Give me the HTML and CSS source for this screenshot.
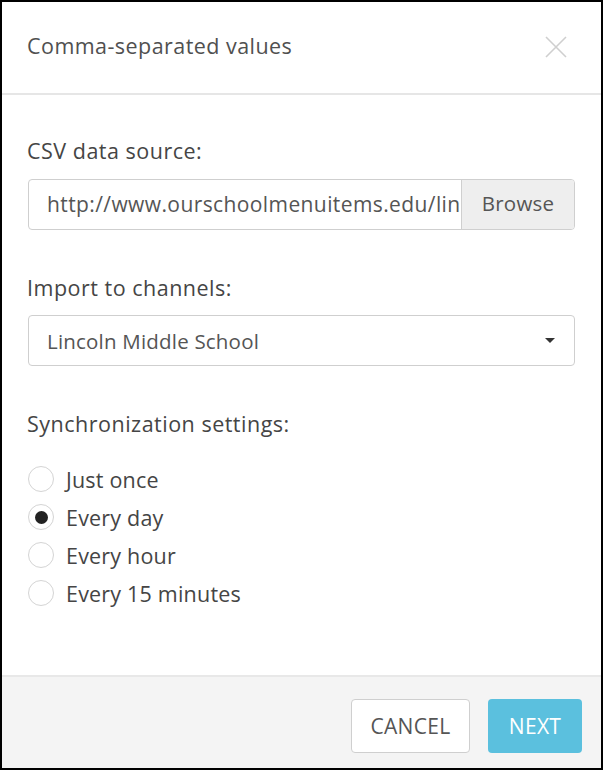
FILE: index.html
```html
<!DOCTYPE html>
<html>
<head>
<meta charset="utf-8">
<link rel="stylesheet" href="styles.css">
</head>
<body>
<div class="frame">
  <div class="header">
    <span class="title">Comma-separated values</span>
    <svg class="close" width="22" height="22" viewBox="0 0 22 22"><path d="M1 1 L21 21 M21 1 L1 21" stroke="#cfcfcf" stroke-width="1.6" fill="none"/></svg>
  </div>
  <div class="content">
    <div class="label">CSV data source:</div>
    <div class="input-group">
      <div class="input">http://www.ourschoolmenuitems.edu/lincoln-middle-school/menu.csv</div>
      <div class="addon">Browse</div>
    </div>
    <div class="label">Import to channels:</div>
    <div class="select">
      <span>Lincoln Middle School</span>
      <span class="caret"></span>
    </div>
    <div class="label">Synchronization settings:</div>
    <div class="radios">
      <div class="radio"><span class="circle"></span><span>Just once</span></div>
      <div class="radio"><span class="circle checked"></span><span>Every day</span></div>
      <div class="radio"><span class="circle"></span><span>Every hour</span></div>
      <div class="radio"><span class="circle"></span><span>Every 15 minutes</span></div>
    </div>
  </div>
  <div class="footer">
    <div class="btn cancel">CANCEL</div>
    <div class="btn next">NEXT</div>
  </div>
</div>
</body>
</html>
```
FILE: styles.css
```css
html, body {
  margin: 0;
  padding: 0;
}
body {
  font-family: "Open Sans", "Lato", sans-serif;
  color: #474747;
}
.frame {
  box-sizing: border-box;
  width: 603px;
  height: 770px;
  border: 2px solid #000;
  background: #fff;
  display: flex;
  flex-direction: column;
}
.header {
  height: 91px;
  border-bottom: 2px solid #e6e6e6;
  display: flex;
  align-items: center;
  justify-content: space-between;
  padding: 0 34px 0 25px;
}
.title {
  font-size: 21.5px;
  letter-spacing: 0.45px;
  color: #505050;
  margin-top: -4px;
}
.close {
  margin-top: -2px;
}
.content {
  flex: 1;
  padding: 44px 26px 0 26px;
}
.label {
  font-size: 21.5px;
  letter-spacing: 0.5px;
  color: #454545;
  line-height: 24px;
  margin-left: -1px;
}
.input-group {
  display: flex;
  height: 51px;
  margin-top: 16px;
  margin-bottom: 46px;
  border: 1px solid #cfcfcf;
  border-radius: 4px;
  box-sizing: border-box;
  overflow: hidden;
}
.input {
  flex: 1;
  min-width: 0;
  white-space: nowrap;
  overflow: hidden;
  font-size: 21px;
  letter-spacing: 0.4px;
  color: #555;
  line-height: 49px;
  padding-left: 18px;
  padding-right: 2px;
}
.addon {
  width: 112px;
  border-left: 1px solid #cfcfcf;
  background: #eeeeee;
  text-align: center;
  line-height: 47px;
  font-size: 20.5px;
  letter-spacing: 0.2px;
  color: #555;
}
.select {
  margin-top: 15px;
  margin-bottom: 46px;
  height: 51px;
  box-sizing: border-box;
  border: 1px solid #cfcfcf;
  border-radius: 4px;
  display: flex;
  align-items: center;
  justify-content: space-between;
  padding: 0 19px 0 18px;
  font-size: 20.5px;
  letter-spacing: 0.2px;
  color: #555;
}
.caret {
  width: 0;
  height: 0;
  border-left: 5.5px solid transparent;
  border-right: 5.5px solid transparent;
  border-top: 5px solid #333;
}
.radios {
  margin-top: 30px;
  display: flex;
  flex-direction: column;
  gap: 12px;
}
.radio {
  display: flex;
  align-items: center;
  height: 26px;
  font-size: 21.5px;
  letter-spacing: 0.2px;
  color: #454545;
}
.circle {
  box-sizing: border-box;
  width: 26px;
  height: 26px;
  border: 1.5px solid #d4d4d4;
  border-radius: 50%;
  margin-left: 0;
  margin-right: 12px;
  display: flex;
  align-items: center;
  justify-content: center;
}
.circle.checked::after {
  content: "";
  width: 13px;
  height: 13px;
  border-radius: 50%;
  background: #222;
}
.footer {
  height: 93px;
  box-sizing: border-box;
  border-top: 2px solid #e8e8e8;
  background: #f4f4f4;
  display: flex;
  justify-content: flex-end;
  align-items: flex-start;
  padding: 22px 19px 0 0;
  gap: 18px;
}
.btn {
  height: 54px;
  box-sizing: border-box;
  border-radius: 4px;
  display: flex;
  align-items: center;
  justify-content: center;
  font-size: 21px;
  letter-spacing: 0.3px;
}
.cancel {
  width: 119px;
  background: #fff;
  border: 1px solid #cfcfcf;
  color: #555;
}
.next {
  width: 94px;
  background: #5bc0de;
  color: #fff;
}
```
